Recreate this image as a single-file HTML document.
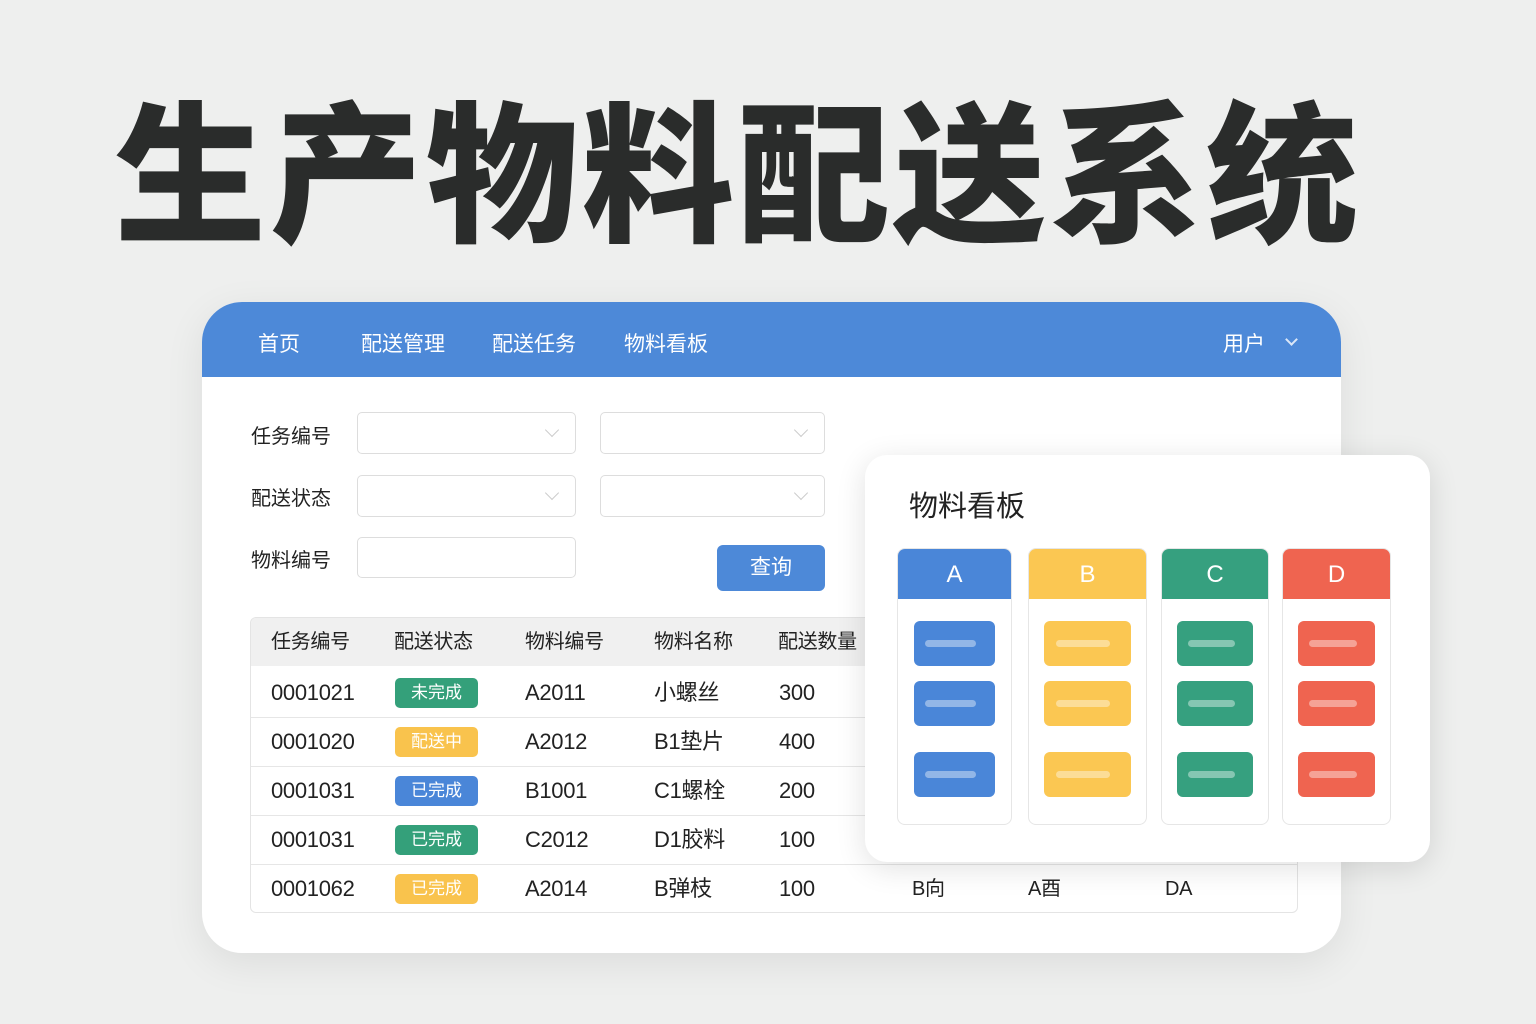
<!DOCTYPE html>
<html><head><meta charset="utf-8"><style>
*{margin:0;padding:0;box-sizing:border-box}
body{width:1536px;height:1024px;background:#eeefee;position:relative;overflow:hidden;font-family:"Liberation Sans","Noto Sans CJK SC",sans-serif;color:#222}
.a{position:absolute}
.title{left:114px;top:98px;font-size:152px;font-weight:900;color:#2a2c2b;letter-spacing:4px;white-space:nowrap;line-height:160px}
.card{left:202px;top:302px;width:1139px;height:651px;background:#fff;border-radius:40px;box-shadow:0 10px 40px rgba(0,0,0,.08);overflow:hidden}
.hdr{left:0;top:0;width:100%;height:75px;background:#4d89d8}
.nav{color:#fff;font-size:21px;top:26px}
.lbl{font-size:20px;color:#222}
.sel{border:1.5px solid #ddd;border-radius:5px;background:#fff;height:42px}
.sel:after{content:"";position:absolute;right:18px;top:12px;width:9px;height:9px;border-right:1.5px solid #ccc;border-bottom:1.5px solid #ccc;transform:rotate(45deg)}
.tbl{left:48px;top:315px;width:1048px;height:296px;border:1px solid #e4e4e4;border-radius:6px;overflow:hidden}
.th{left:0;top:0;width:100%;height:48px;background:#f0f0f0}
.cell{font-size:22px;color:#222;white-space:nowrap;line-height:30px;height:30px;letter-spacing:-0.3px}
.row{left:0;width:100%;height:1px;background:#e6e6e6}
.tag{width:83px;height:30px;border-radius:5px;color:#fff;font-size:17px;text-align:center;line-height:30px}
.kb{left:865px;top:455px;width:565px;height:407px;background:#fff;border-radius:22px;box-shadow:0 6px 30px rgba(0,0,0,.12)}
.col{top:93px;height:277px;border:1.5px solid #e6e6e6;border-radius:8px;background:#fff;overflow:hidden}
.ch{left:0;top:0;width:100%;height:50px;color:#fff;font-size:24px;text-align:center;line-height:52px}
.it{height:45px;border-radius:6px}
.it:after{content:"";position:absolute;left:14%;top:19px;width:62%;height:7px;border-radius:4px;background:rgba(255,255,255,.4)}
</style></head><body>
<div class="a title">生产物料配送系统</div>
<div class="a card">
 <div class="a hdr"></div>
 <div class="a nav" style="left:56px">首页</div>
 <div class="a nav" style="left:159px">配送管理</div>
 <div class="a nav" style="left:290px">配送任务</div>
 <div class="a nav" style="left:422px">物料看板</div>
 <div class="a nav" style="left:1021px">用户</div>
 <div class="a" style="left:1085px;top:33px;width:9px;height:9px;border-right:2px solid #fff;border-bottom:2px solid #fff;transform:rotate(45deg);opacity:.8"></div>
 <div class="a lbl" style="left:49px;top:118px">任务编号</div>
 <div class="a lbl" style="left:49px;top:180px">配送状态</div>
 <div class="a lbl" style="left:49px;top:242px">物料编号</div>
 <div class="a sel" style="left:155px;top:110px;width:219px"></div>
 <div class="a sel" style="left:398px;top:110px;width:225px"></div>
 <div class="a sel" style="left:155px;top:173px;width:219px"></div>
 <div class="a sel" style="left:398px;top:173px;width:225px"></div>
 <div class="a" style="left:155px;top:235px;width:219px;height:41px;border:1.5px solid #ddd;border-radius:5px"></div>
 <div class="a" style="left:515px;top:243px;width:108px;height:46px;background:#4d89d8;border-radius:6px;color:#fff;font-size:21px;text-align:center;line-height:46px">查询</div>
 <div class="a tbl">
  <div class="a th"></div>
  <div class="a cell" style="left:20px;top:9px;font-size:20px">任务编号</div>
  <div class="a cell" style="left:143px;top:9px;font-size:20px">配送状态</div>
  <div class="a cell" style="left:274px;top:9px;font-size:20px">物料编号</div>
  <div class="a cell" style="left:403px;top:9px;font-size:20px">物料名称</div>
  <div class="a cell" style="left:527px;top:9px;font-size:20px">配送数量</div>
  <div class="a row" style="top:99px"></div><div class="a row" style="top:148px"></div><div class="a row" style="top:197px"></div><div class="a row" style="top:246px"></div>
  <div class="a cell" style="left:20px;top:60px">0001021</div><div class="a tag" style="left:144px;top:60px;background:#34a07a">未完成</div><div class="a cell" style="left:274px;top:60px">A2011</div><div class="a cell" style="left:403px;top:60px">小螺丝</div><div class="a cell" style="left:528px;top:60px">300</div>
  <div class="a cell" style="left:20px;top:109px">0001020</div><div class="a tag" style="left:144px;top:109px;background:#f9c34d">配送中</div><div class="a cell" style="left:274px;top:109px">A2012</div><div class="a cell" style="left:403px;top:109px">B1垫片</div><div class="a cell" style="left:528px;top:109px">400</div>
  <div class="a cell" style="left:20px;top:158px">0001031</div><div class="a tag" style="left:144px;top:158px;background:#4a86d8">已完成</div><div class="a cell" style="left:274px;top:158px">B1001</div><div class="a cell" style="left:403px;top:158px">C1螺栓</div><div class="a cell" style="left:528px;top:158px">200</div>
  <div class="a cell" style="left:20px;top:207px">0001031</div><div class="a tag" style="left:144px;top:207px;background:#34a07a">已完成</div><div class="a cell" style="left:274px;top:207px">C2012</div><div class="a cell" style="left:403px;top:207px">D1胶料</div><div class="a cell" style="left:528px;top:207px">100</div>
  <div class="a cell" style="left:20px;top:256px">0001062</div><div class="a tag" style="left:144px;top:256px;background:#f9c34d">已完成</div><div class="a cell" style="left:274px;top:256px">A2014</div><div class="a cell" style="left:403px;top:256px">B弹枝</div><div class="a cell" style="left:528px;top:256px">100</div>
  <div class="a cell" style="left:661px;top:256px;font-size:20px">B向</div><div class="a cell" style="left:777px;top:256px;font-size:20px">A酉</div><div class="a cell" style="left:914px;top:256px;font-size:20px">DA</div>
 </div>
</div>
<div class="a kb">
 <div class="a" style="left:44px;top:28px;font-size:29px;color:#222">物料看板</div>
 <div class="a col" style="left:32px;width:115px"><div class="a ch" style="background:#4a86d8">A</div><div class="a it" style="left:16px;top:72px;width:81px;background:#4a86d8"></div><div class="a it" style="left:16px;top:132px;width:81px;background:#4a86d8"></div><div class="a it" style="left:16px;top:203px;width:81px;background:#4a86d8"></div></div>
 <div class="a col" style="left:163px;width:119px"><div class="a ch" style="background:#fbc752">B</div><div class="a it" style="left:15px;top:72px;width:87px;background:#fbc752"></div><div class="a it" style="left:15px;top:132px;width:87px;background:#fbc752"></div><div class="a it" style="left:15px;top:203px;width:87px;background:#fbc752"></div></div>
 <div class="a col" style="left:296px;width:108px"><div class="a ch" style="background:#36a07f">C</div><div class="a it" style="left:15px;top:72px;width:76px;background:#36a07f"></div><div class="a it" style="left:15px;top:132px;width:76px;background:#36a07f"></div><div class="a it" style="left:15px;top:203px;width:76px;background:#36a07f"></div></div>
 <div class="a col" style="left:417px;width:109px"><div class="a ch" style="background:#ef6450">D</div><div class="a it" style="left:15px;top:72px;width:77px;background:#ef6450"></div><div class="a it" style="left:15px;top:132px;width:77px;background:#ef6450"></div><div class="a it" style="left:15px;top:203px;width:77px;background:#ef6450"></div></div>
</div>
</body></html>
